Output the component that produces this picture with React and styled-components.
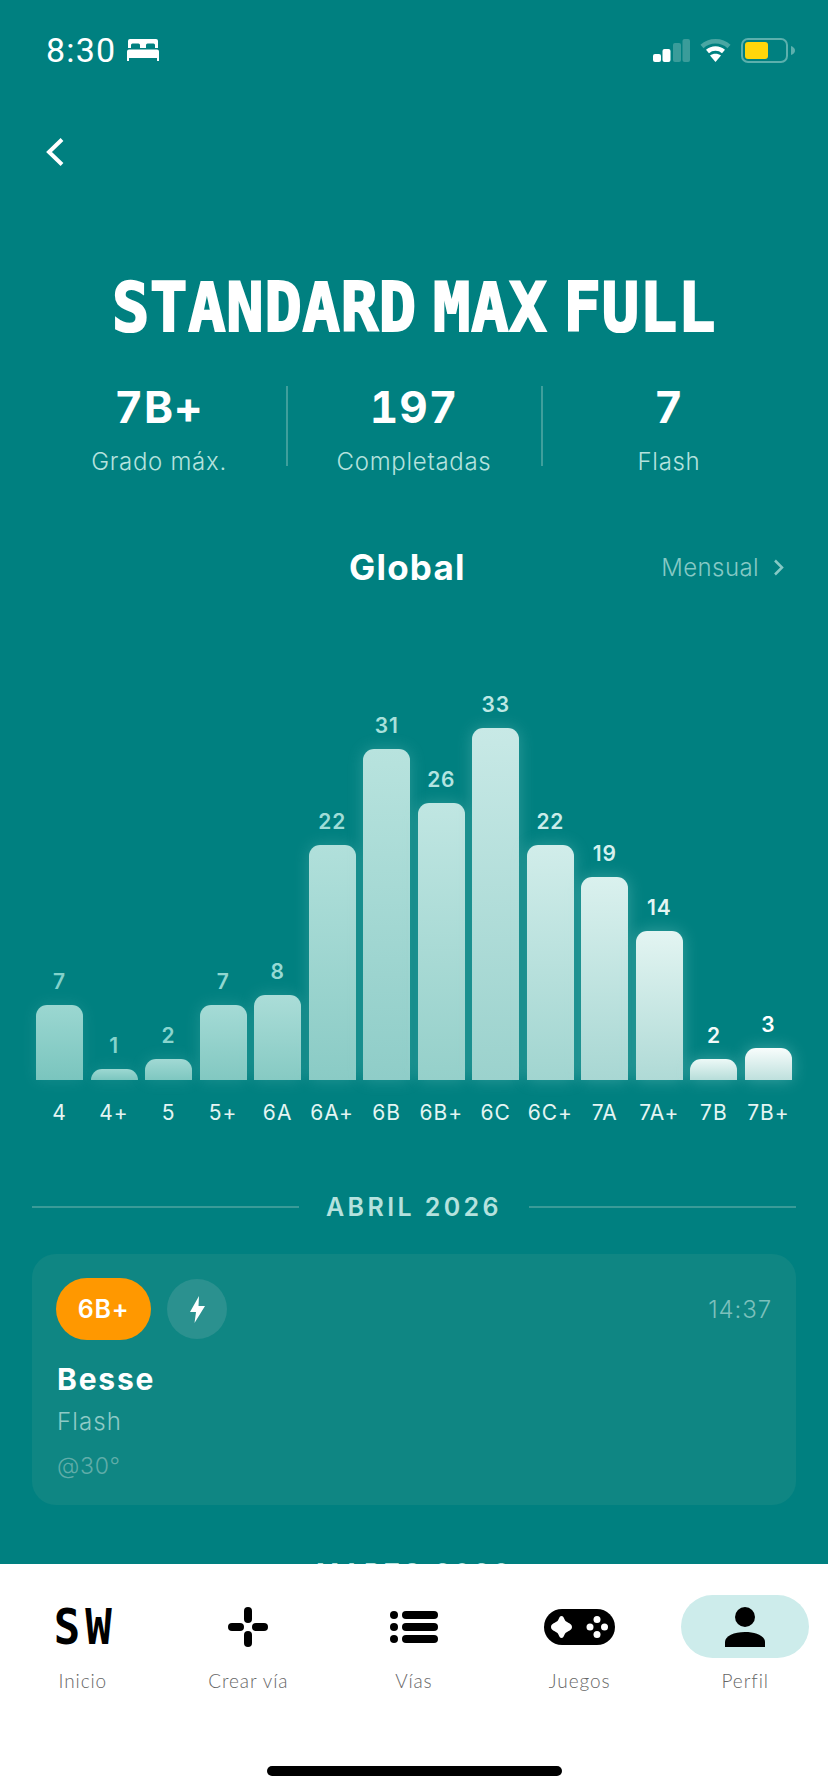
import React from "react";
import styled, { createGlobalStyle } from "styled-components";

const GRADES = [
  ["4", 7], ["4+", 1], ["5", 2], ["5+", 7], ["6A", 8], ["6A+", 22], ["6B", 31],
  ["6B+", 26], ["6C", 33], ["6C+", 22], ["7A", 19], ["7A+", 14], ["7B", 2], ["7B+", 3],
];
const UNIT = 10.67;

// blend two [r, g, b] colours, t between 0 and 1
const mix = (a, b, t) =>
  `rgb(${a.map((v, i) => Math.round(v + (b[i] - v) * t)).join(",")})`;

const GlobalStyle = createGlobalStyle`
  html, body {
    margin: 0;
    padding: 0;
    background: #008080;
  }
  * {
    box-sizing: border-box;
  }
`;

const Screen = styled.div`
  width: 828px;
  height: 1792px;
  display: flex;
  flex-direction: column;
  overflow: hidden;
  background: #008080;
  color: #fff;
  font-family: Inter, "Noto Sans", sans-serif;
`;

const Content = styled.div`
  height: 1564px;
  flex: none;
  overflow: hidden;
`;

const StatusBar = styled.div`
  height: 100px;
  padding: 0 33px 0 46px;
  display: flex;
  align-items: center;
`;

const Clock = styled.span`
  font-family: Roboto, sans-serif;
  font-size: 34px;
  line-height: 40px;
  letter-spacing: 1.2px;
  margin-right: 11px;
`;

const StatusIcons = styled.div`
  margin-left: auto;
  display: flex;
  align-items: center;
  gap: 10px;
`;

const BackButton = styled.div`
  margin: 38px 0 0 46px;
  height: 28px;
  display: flex;
`;

const Title = styled.h1`
  margin: 116px 0 0;
  height: 51px;
  text-align: center;
  font-family: "DejaVu Sans Mono", monospace;
  font-weight: 700;
  font-size: 62px;
  line-height: 51px;
  letter-spacing: 0.8px;
  word-spacing: -22px;
  white-space: nowrap;
  -webkit-text-stroke: 2px #fff;
  transform: scaleY(1.08);
`;

const Stats = styled.div`
  margin-top: 53px;
  padding: 0 32px;
  display: grid;
  grid-template-columns: 1fr 1px 1fr 1px 1fr;
`;

const Stat = styled.div`
  display: flex;
  flex-direction: column;
  align-items: center;
`;

const StatValue = styled.div`
  font-size: 44px;
  font-weight: 700;
  line-height: 42px;
  letter-spacing: 1px;
  font-feature-settings: "tnum";
`;

const StatLabel = styled.div`
  margin-top: 19px;
  font-size: 24px;
  font-weight: 300;
  line-height: 30px;
  letter-spacing: 0.7px;
  color: #b5e2de;
`;

const StatDivider = styled.div`
  width: 2px;
  height: 80px;
  background: #3f9f9c;
`;

const ChartHeader = styled.div`
  margin-top: 70px;
  height: 40px;
  padding: 0 44px 0 349px;
  display: flex;
  align-items: center;
`;

const ChartTitle = styled.div`
  font-size: 35px;
  font-weight: 700;
  line-height: 40px;
  letter-spacing: 1.2px;
`;

const ChartSwitch = styled.div`
  margin-left: auto;
  display: flex;
  align-items: center;
  gap: 14px;
  font-size: 24px;
  font-weight: 300;
  letter-spacing: 0.4px;
  color: #86c9c5;
`;

const Chart = styled.div`
  margin-top: 105px;
  height: 434px;
  padding: 0 36px;
  display: grid;
  grid-template-columns: repeat(14, 47px);
  justify-content: space-between;
`;

const BarColumn = styled.div`
  display: flex;
  flex-direction: column;
  justify-content: flex-end;
  align-items: center;
`;

const BarValue = styled.div`
  font-size: 21px;
  font-weight: 600;
  line-height: 24px;
  margin-bottom: 11px;
  letter-spacing: 0.8px;
  color: ${(p) => mix([130, 210, 203], [255, 255, 255], p.$t ** 1.5)};
`;

const Bar = styled.div`
  width: 47px;
  border-radius: 11px 11px 0 0;
  background: linear-gradient(
    180deg,
    ${(p) => mix([155, 215, 209], [248, 253, 252], p.$t ** 1.5)},
    ${(p) => mix([122, 197, 190], [190, 224, 221], p.$t ** 1.5)}
  );
  box-shadow: 0 0 16px rgba(190, 240, 235, ${(p) => 0.12 + p.$t * 0.2});
`;

const BarLabel = styled.div`
  margin-top: 20px;
  font-size: 21px;
  line-height: 26px;
  letter-spacing: 1px;
  white-space: nowrap;
  color: #e4f5f3;
`;

const MonthHeader = styled.div`
  margin-top: ${(p) => p.$top}px;
  padding: 0 32px;
  display: flex;
  align-items: center;
  gap: 27px;
`;

const MonthLine = styled.div`
  flex: 1;
  height: 2px;
  background: #3a9b98;
`;

const MonthName = styled.div`
  font-size: 25px;
  font-weight: 600;
  line-height: 30px;
  letter-spacing: 3.4px;
  color: #b5e2de;
`;

const Card = styled.div`
  margin: 32px 32px 0;
  height: 251px;
  padding: 24px 24px 24px 24px;
  border-radius: 24px;
  background: #0f8683;
`;

const CardTop = styled.div`
  display: flex;
  align-items: center;
  gap: 16px;
`;

const GradeBadge = styled.div`
  width: 95px;
  height: 62px;
  border-radius: 31px;
  background: #ff9800;
  display: flex;
  align-items: center;
  justify-content: center;
  font-size: 25px;
  font-weight: 600;
  letter-spacing: 0.8px;
`;

const FlashBadge = styled.div`
  width: 60px;
  height: 60px;
  border-radius: 50%;
  background: #2b918f;
  display: flex;
  align-items: center;
  justify-content: center;
`;

const CardTime = styled.div`
  margin-left: auto;
  font-size: 24px;
  font-weight: 300;
  letter-spacing: 0.9px;
  color: #7cc0bc;
`;

const RouteName = styled.div`
  margin: 21px 0 0 1px;
  font-size: 30px;
  font-weight: 700;
  line-height: 36px;
  letter-spacing: 1.8px;
`;

const RouteType = styled.div`
  margin: 10px 0 0 1px;
  font-size: 24px;
  font-weight: 300;
  line-height: 30px;
  letter-spacing: 1.1px;
  color: #8fcac6;
`;

const RouteAngle = styled.div`
  margin: 14px 0 0 1px;
  font-size: 23px;
  font-weight: 300;
  line-height: 30px;
  letter-spacing: 0.7px;
  color: #60ada9;
`;

const Nav = styled.nav`
  flex: 1;
  background: #fff;
  padding-top: 31px;
  display: flex;
  flex-direction: column;
`;

const NavItems = styled.div`
  display: grid;
  grid-template-columns: repeat(5, 1fr);
`;

const NavItem = styled.div`
  display: flex;
  flex-direction: column;
  align-items: center;
`;

const NavIcon = styled.div`
  width: 128px;
  height: 63px;
  border-radius: 32px;
  background: ${(p) => (p.$active ? "#cdeceb" : "transparent")};
  display: flex;
  align-items: center;
  justify-content: center;
  color: #000;
`;

const NavLogo = styled.span`
  font-family: "DejaVu Sans Mono", monospace;
  font-size: 44px;
  font-weight: 700;
  line-height: 36px;
  letter-spacing: 5px;
  margin-right: -5px;
  transform: scaleY(1.12);
`;

const NavLabel = styled.div`
  margin-top: 11px;
  font-family: Lato, sans-serif;
  font-size: 19px;
  font-weight: 300;
  line-height: 24px;
  letter-spacing: 0.9px;
  color: #666;
`;

const HomeIndicator = styled.div`
  width: 295px;
  height: 10px;
  margin: 73px 0 0 267px;
  border-radius: 5px;
  background: #000;
`;

function BedIcon() {
  return (
    <svg width="32" height="22" viewBox="0 0 32 22" fill="#fff">
      <path d="M3 0h26a2 2 0 0 1 2 2v7h-3V6a1.500 1.500 0 0 0-1.500-1.500h-6A1.500 1.500 0 0 0 19 6v3h-6V6a1.500 1.500 0 0 0-1.500-1.500h-6A1.500 1.500 0 0 0 4 6v3H1V2a2 2 0 0 1 2-2z" />
      <path d="M2 10.500h28a2 2 0 0 1 2 2V22h-2v-3H2v3H0v-9.500a2 2 0 0 1 2-2z" />
    </svg>
  );
}

function SignalIcon() {
  return (
    <svg width="37" height="23" viewBox="0 0 37 23">
      <rect x="0" y="15" width="8" height="8" rx="2" fill="#fff" />
      <rect x="9.500" y="10" width="8" height="13" rx="2" fill="#fff" />
      <rect x="20" y="4" width="8" height="19" rx="2" fill="#3a9c9a" />
      <rect x="29.500" y="0" width="7.500" height="23" rx="2" fill="#3a9c9a" />
    </svg>
  );
}

function WifiIcon() {
  return (
    <svg width="31" height="24" viewBox="0 0 31 24" fill="none" strokeWidth="4.500">
      <path d="M2 8.500C9.500 1.500 21.500 1.500 29 8.500" stroke="#4aa6a3" />
      <path d="M7.500 13.500C12 9.500 19 9.500 23.500 13.500" stroke="#fff" />
      <path d="M15.500 24l-5.500-6.500c3-2.500 8-2.500 11 0z" fill="#fff" />
    </svg>
  );
}

function BatteryIcon() {
  return (
    <svg width="54" height="25" viewBox="0 0 54 25">
      <rect x="1" y="1" width="45" height="23" rx="6" fill="none" stroke="#5cb0ad" strokeWidth="2" />
      <rect x="4" y="4" width="23" height="17" rx="3" fill="#ffd60a" />
      <path d="M50 8c2.500 1 4 2.500 4 4.500S52.500 16 50 17z" fill="#5cb0ad" />
    </svg>
  );
}

function BackIcon() {
  return (
    <svg width="18" height="28" viewBox="0 0 18 28" fill="none">
      <path d="M16 1.500L3 14l13 12.500" stroke="#fff" strokeWidth="4" />
    </svg>
  );
}

function SmallChevron() {
  return (
    <svg width="11" height="17" viewBox="0 0 11 17" fill="none">
      <path d="M2 1.500l7 7-7 7" stroke="#86c9c5" strokeWidth="2.500" />
    </svg>
  );
}

function BoltIcon() {
  return (
    <svg width="15" height="27" viewBox="0 0 15 27" fill="#fff">
      <path d="M9 0L0 16h6L4.500 27 15 10H8.500z" />
    </svg>
  );
}

function CreateIcon() {
  return (
    <svg width="40" height="40" viewBox="0 0 40 40" fill="#000">
      <rect x="16" y="0" width="8" height="16" rx="4" />
      <rect x="16" y="24" width="8" height="16" rx="4" />
      <rect x="0" y="16" width="16" height="8" rx="4" />
      <rect x="24" y="16" width="16" height="8" rx="4" />
    </svg>
  );
}

function RoutesIcon() {
  return (
    <svg width="48" height="32" viewBox="0 0 48 32" fill="#000">
      <circle cx="4" cy="4" r="4" />
      <circle cx="4" cy="16" r="4" />
      <circle cx="4" cy="28" r="4" />
      <rect x="12" y="0" width="36" height="8" rx="4" />
      <rect x="12" y="12" width="36" height="8" rx="4" />
      <rect x="12" y="24" width="36" height="8" rx="4" />
    </svg>
  );
}

function GamesIcon() {
  return (
    <svg width="71" height="36" viewBox="0 0 71 36">
      <rect width="71" height="36" rx="18" fill="#000" />
      <path
        d="M17.500 7c2.500 0 2.500 3.500 4 5s6.500 2.500 6.500 6-5 4.500-6.500 6-1.500 5-4 5-2.500-3.500-4-5S7 21.500 7 18s5-4.500 6.500-6 1.500-5 4-5z"
        fill="#fff"
      />
      <circle cx="53" cy="10.500" r="3.500" fill="#fff" />
      <circle cx="53" cy="25.500" r="3.500" fill="#fff" />
      <circle cx="46" cy="18" r="3.500" fill="#fff" />
      <circle cx="60.500" cy="18" r="3.500" fill="#fff" />
    </svg>
  );
}

function ProfileIcon() {
  return (
    <svg width="40" height="40" viewBox="0 0 40 40" fill="#000">
      <circle cx="20" cy="10" r="10" />
      <path d="M0 40v-5C0 29 9 25 20 25s20 4 20 10v5z" />
    </svg>
  );
}

function App() {
  return (
    <Screen>
      <GlobalStyle />
      <Content>
        <StatusBar>
          <Clock>8:30</Clock>
          <BedIcon />
          <StatusIcons>
            <SignalIcon />
            <WifiIcon />
            <BatteryIcon />
          </StatusIcons>
        </StatusBar>

        <BackButton>
          <BackIcon />
        </BackButton>

        <Title>STANDARD MAX FULL</Title>

        <Stats>
          <Stat>
            <StatValue>7B+</StatValue>
            <StatLabel>Grado máx.</StatLabel>
          </Stat>
          <StatDivider />
          <Stat>
            <StatValue>197</StatValue>
            <StatLabel>Completadas</StatLabel>
          </Stat>
          <StatDivider />
          <Stat>
            <StatValue>7</StatValue>
            <StatLabel>Flash</StatLabel>
          </Stat>
        </Stats>

        <ChartHeader>
          <ChartTitle>Global</ChartTitle>
          <ChartSwitch>
            Mensual
            <SmallChevron />
          </ChartSwitch>
        </ChartHeader>

        <Chart>
          {GRADES.map(([grade, count], i) => (
            <BarColumn key={grade}>
              <BarValue $t={i / 13}>{count}</BarValue>
              <Bar $t={i / 13} style={{ height: count * UNIT }} />
              <BarLabel>{grade}</BarLabel>
            </BarColumn>
          ))}
        </Chart>

        <MonthHeader $top={66}>
          <MonthLine />
          <MonthName>ABRIL 2026</MonthName>
          <MonthLine />
        </MonthHeader>

        <Card>
          <CardTop>
            <GradeBadge>6B+</GradeBadge>
            <FlashBadge>
              <BoltIcon />
            </FlashBadge>
            <CardTime>14:37</CardTime>
          </CardTop>
          <RouteName>Besse</RouteName>
          <RouteType>Flash</RouteType>
          <RouteAngle>@30°</RouteAngle>
        </Card>

        <MonthHeader $top={53}>
          <MonthLine />
          <MonthName>MARZO 2026</MonthName>
          <MonthLine />
        </MonthHeader>
      </Content>

      <Nav>
        <NavItems>
          <NavItem>
            <NavIcon>
              <NavLogo>SW</NavLogo>
            </NavIcon>
            <NavLabel>Inicio</NavLabel>
          </NavItem>
          <NavItem>
            <NavIcon>
              <CreateIcon />
            </NavIcon>
            <NavLabel>Crear vía</NavLabel>
          </NavItem>
          <NavItem>
            <NavIcon>
              <RoutesIcon />
            </NavIcon>
            <NavLabel>Vías</NavLabel>
          </NavItem>
          <NavItem>
            <NavIcon>
              <GamesIcon />
            </NavIcon>
            <NavLabel>Juegos</NavLabel>
          </NavItem>
          <NavItem>
            <NavIcon $active>
              <ProfileIcon />
            </NavIcon>
            <NavLabel>Perfil</NavLabel>
          </NavItem>
        </NavItems>
        <HomeIndicator />
      </Nav>
    </Screen>
  );
}

export default App;
